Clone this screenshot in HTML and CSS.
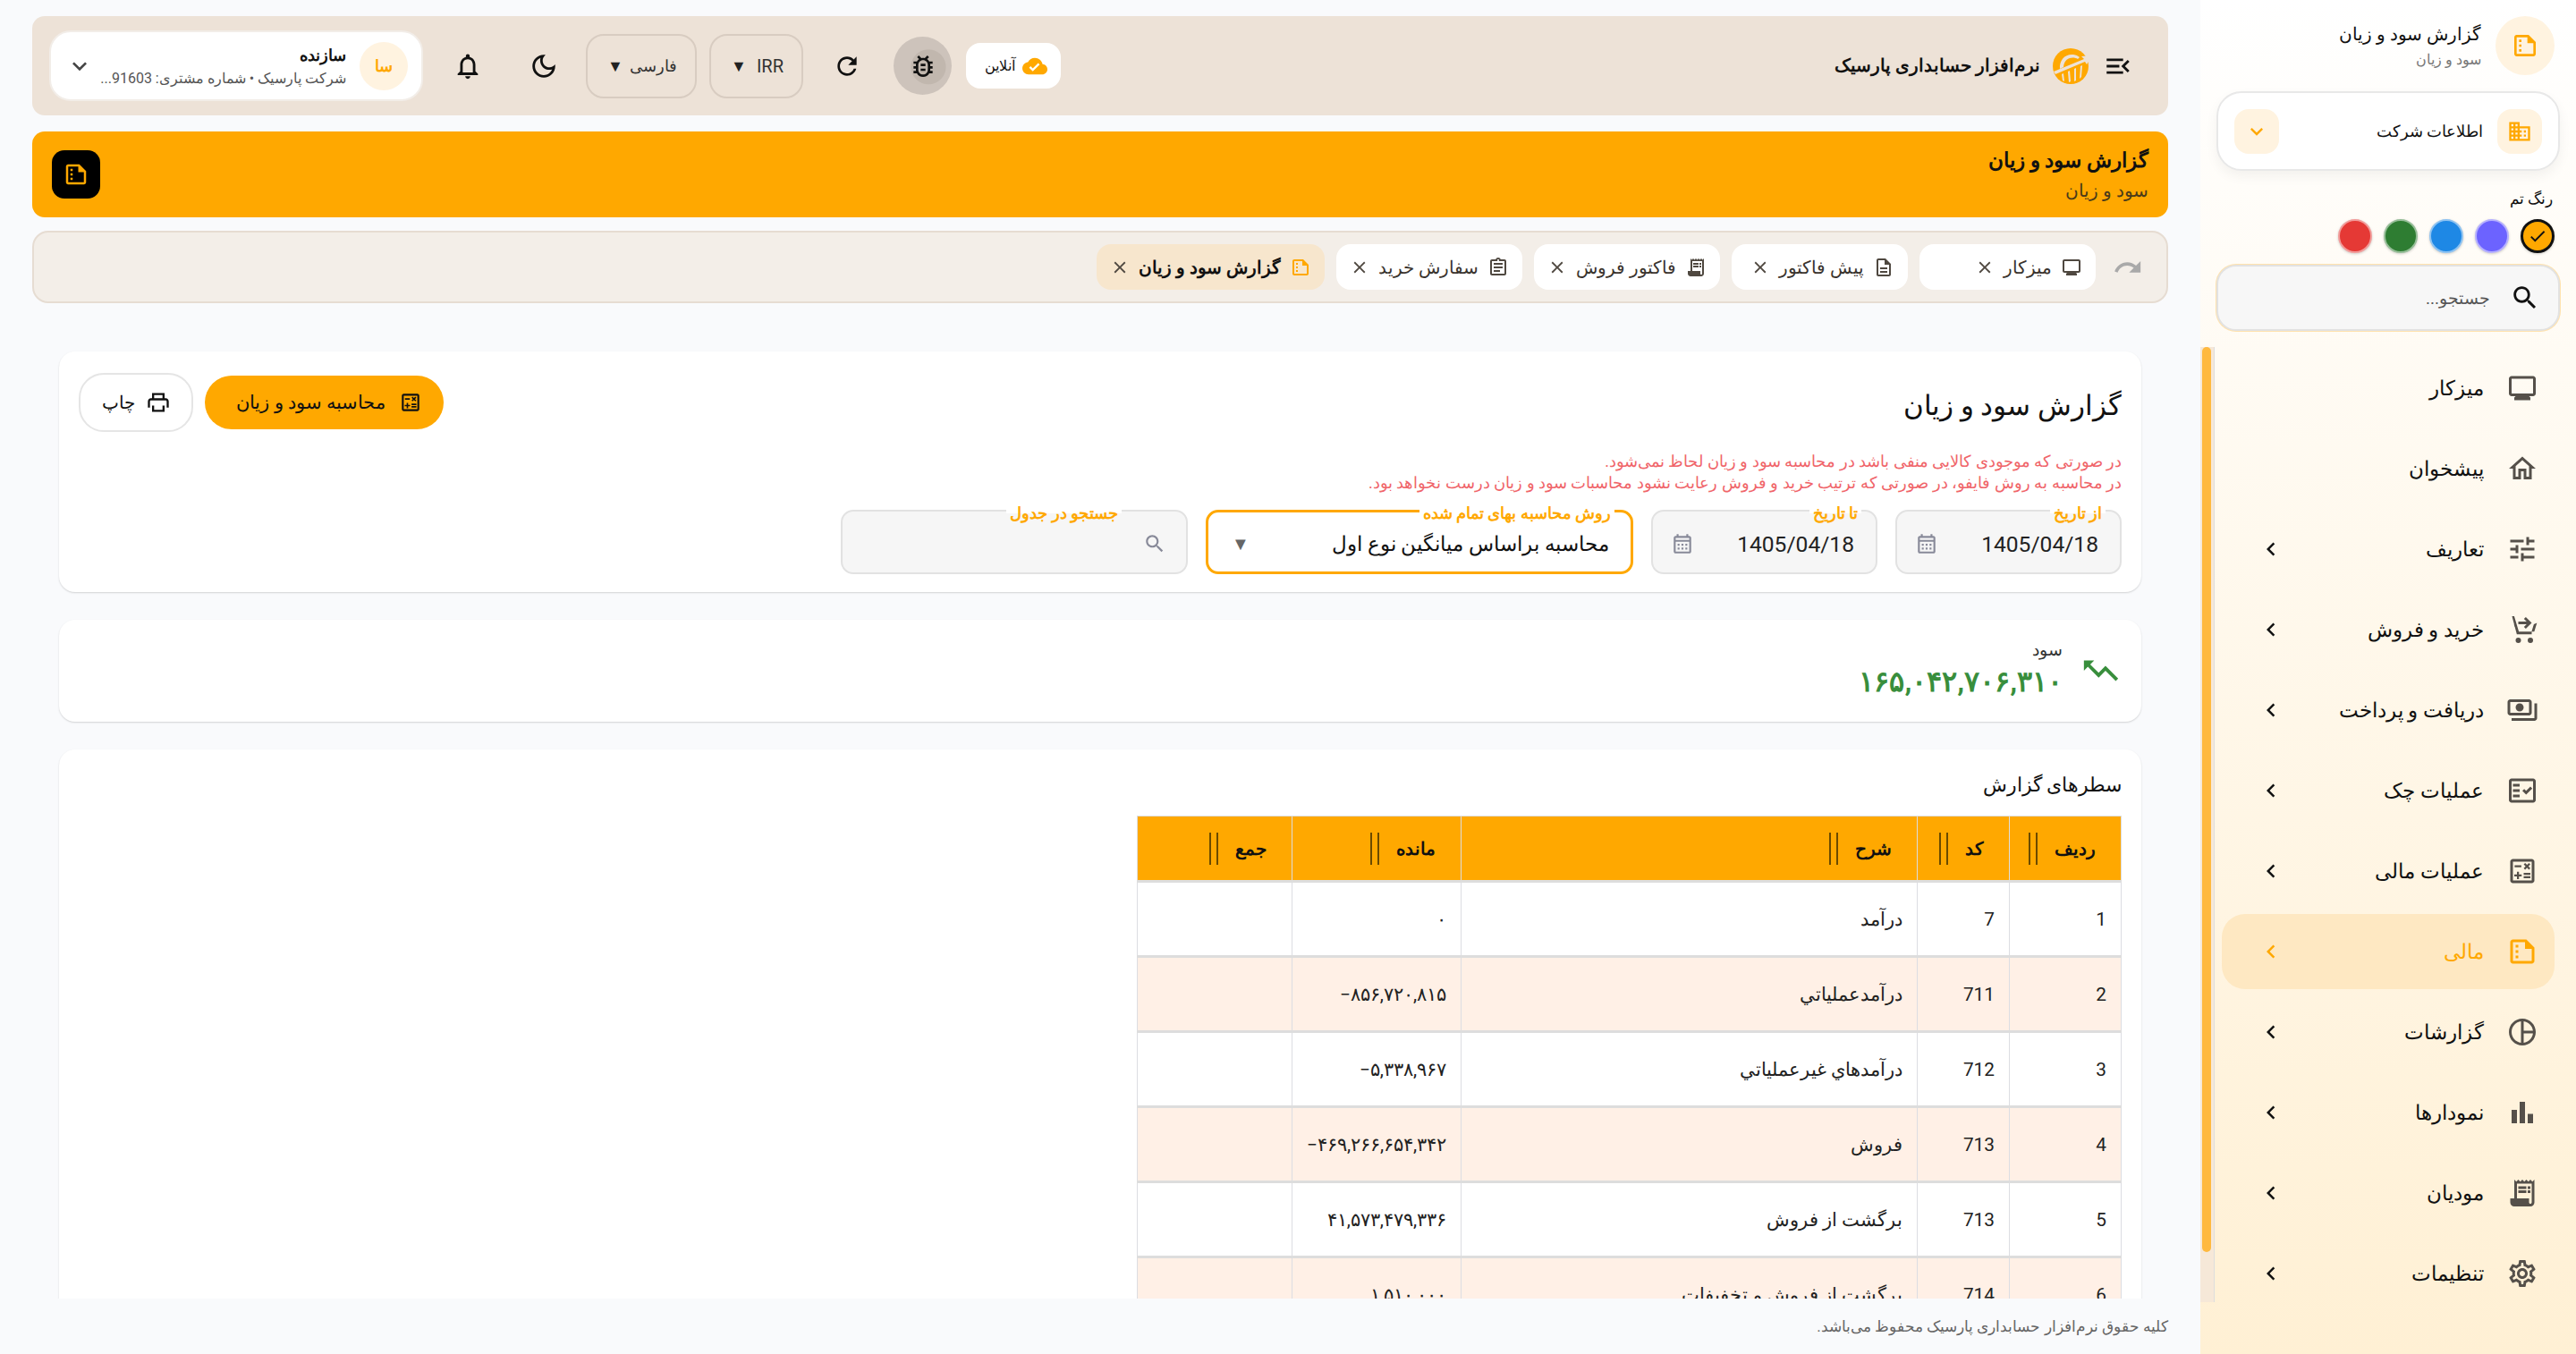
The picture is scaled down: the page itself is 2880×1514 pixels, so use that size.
FILE: index.html
```html
<!DOCTYPE html>
<html lang="fa" dir="rtl">
<head>
  <meta charset="UTF-8">
  <meta name="viewport" content="width=device-width, initial-scale=1.0">
  <title>گزارش سود و زیان</title>
  <link rel="stylesheet" href="styles.css">
</head>
<body>
  <svg class="icon-defs" aria-hidden="true">
    <symbol id="i-desktop" viewBox="0 0 24 24"><path d="M20 3H4c-1.1 0-2 .9-2 2v11c0 1.1.9 2 2 2h3l-1 1v2h12v-2l-1-1h3c1.1 0 2-.9 2-2V5c0-1.1-.9-2-2-2zm0 13H4V5h16v11z"/></symbol>
    <symbol id="i-home" viewBox="0 0 24 24"><path d="M12 5.69l5 4.5V18h-2v-6H9v6H7v-7.81l5-4.5M12 3L2 12h3v8h6v-6h2v6h6v-8h3L12 3z"/></symbol>
    <symbol id="i-tune" viewBox="0 0 24 24"><path d="M3 17v2h6v-2H3zM3 5v2h10V5H3zm10 16v-2h8v-2h-8v-2h-2v6h2zM7 9v2H3v2h4v2h2V9H7zm14 4v-2H11v2h10zm-6-4h2V7h4V5h-4V3h-2v6z"/></symbol>
    <symbol id="i-cart" viewBox="0 0 24 24"><path d="M1 2h3.3l3.6 13.5H19v-2H9.4L6 2.2V2zM7.3 8H5.8l.5 2h.9zM20.6 8l-1.7 5.5h2l2-6.5z"/><path d="M9 6h6.2l-2-2L14.6 2.6 19 7l-4.4 4.4-1.4-1.4 2-2H9z"/><circle cx="9" cy="20" r="2"/><circle cx="18" cy="20" r="2"/></symbol>
    <symbol id="i-payments" viewBox="0 0 24 24"><path d="M19 14V6c0-1.1-.9-2-2-2H3c-1.1 0-2 .9-2 2v8c0 1.1.9 2 2 2h14c1.1 0 2-.9 2-2zm-2 0H3V6h14v8zm-7-7c-1.66 0-3 1.34-3 3s1.34 3 3 3 3-1.34 3-3-1.34-3-3-3zm13 0v11c0 1.1-.9 2-2 2H4v-2h17V7h2z"/></symbol>
    <symbol id="i-check" viewBox="0 0 24 24"><path d="M20 3H4c-1.1 0-2 .9-2 2v14c0 1.1.9 2 2 2h16c1.1 0 2-.9 2-2V5c0-1.1-.9-2-2-2zm0 16H4V5h16v14z"/><path d="M19.41 10.42l-1.42-1.42-3.17 3.17-1.41-1.42L12 12.16 14.82 15zM5 7h5v2H5zM5 11h5v2H5zM5 15h5v2H5z"/></symbol>
    <symbol id="i-calc" viewBox="0 0 24 24"><path d="M19 3H5c-1.1 0-2 .9-2 2v14c0 1.1.9 2 2 2h14c1.1 0 2-.9 2-2V5c0-1.1-.9-2-2-2zm0 16H5V5h14v14z"/><path d="M6.25 7.72h5v1.5h-5zM13 15.75h5v1.5h-5zM13 13.25h5v1.5h-5zM8 18h1.5v-2h2v-1.5h-2v-2H8v2H6V16h2zM14.09 10.95l1.41-1.41 1.41 1.41 1.06-1.06-1.41-1.42 1.41-1.41-1.06-1.06-1.41 1.41-1.41-1.41-1.06 1.06 1.41 1.41-1.41 1.42z"/></symbol>
    <symbol id="i-summary" viewBox="0 0 24 24"><path d="M15 3H5c-1.1 0-1.99.9-1.99 2L3 19c0 1.1.89 2 1.99 2H19c1.1 0 2-.9 2-2V9l-6-6zM5 19V5h9v5h5v9H5z"/><path d="M7 7h2v2H7zM7 11h2v2H7zM7 15h2v2H7z"/></symbol>
    <symbol id="i-pie" viewBox="0 0 24 24"><path d="M12 2C6.48 2 2 6.48 2 12s4.48 10 10 10 10-4.48 10-10S17.52 2 12 2zm-1 17.93C7.05 19.44 4 16.08 4 12s3.05-7.44 7-7.93v15.86zM13 4.07c3.61.45 6.48 3.32 6.93 6.93H13V4.07zM13 19.93V13h6.93c-.45 3.61-3.32 6.48-6.93 6.93z"/></symbol>
    <symbol id="i-bars" viewBox="0 0 24 24"><path d="M4 10h4v10H4zM10 4h4v16h-4zM16 13h4v7h-4z"/></symbol>
    <symbol id="i-receipt" viewBox="0 0 24 24"><path d="M19.5 3.5 18 2l-1.5 1.5L15 2l-1.5 1.5L12 2l-1.5 1.5L9 2 7.5 3.5 6 2v14H3v3c0 1.66 1.34 3 3 3h12c1.66 0 3-1.34 3-3V2l-1.5 1.5zM19 19c0 .55-.45 1-1 1s-1-.45-1-1v-3H8V5h11v14z"/><path d="M9 7h6v2H9zM16 7h2v2h-2zM9 10h6v2H9zM16 10h2v2h-2z"/></symbol>
    <symbol id="i-gear" viewBox="0 0 24 24"><path d="M19.43 12.98c.04-.32.07-.64.07-.98 0-.34-.03-.66-.07-.98l2.11-1.65c.19-.15.24-.42.12-.64l-2-3.46c-.09-.16-.26-.25-.44-.25-.06 0-.12.01-.17.03l-2.49 1c-.52-.4-1.08-.73-1.69-.98l-.38-2.65C14.46 2.18 14.25 2 14 2h-4c-.25 0-.46.18-.49.42l-.38 2.65c-.61.25-1.17.59-1.69.98l-2.49-1c-.06-.02-.12-.03-.18-.03-.17 0-.34.09-.43.25l-2 3.46c-.13.22-.07.49.12.64l2.11 1.65c-.04.32-.07.65-.07.98 0 .33.03.66.07.98l-2.11 1.65c-.19.15-.24.42-.12.64l2 3.46c.09.16.26.25.44.25.06 0 .12-.01.17-.03l2.49-1c.52.4 1.08.73 1.69.98l.38 2.65c.03.24.24.42.49.42h4c.25 0 .46-.18.49-.42l.38-2.65c.61-.25 1.17-.59 1.69-.98l2.49 1c.06.02.12.03.18.03.17 0 .34-.09.43-.25l2-3.46c.12-.22.07-.49-.12-.64l-2.11-1.65zm-1.98-1.71c.04.31.05.52.05.73 0 .21-.02.43-.05.73l-.14 1.13.89.7 1.08.84-.7 1.21-1.27-.51-1.04-.42-.9.68c-.43.32-.84.56-1.25.73l-1.06.43-.16 1.13-.2 1.35h-1.4l-.19-1.35-.16-1.13-1.06-.43c-.43-.18-.83-.41-1.23-.71l-.91-.7-1.06.43-1.27.51-.7-1.21 1.08-.84.89-.7-.14-1.13c-.03-.31-.05-.54-.05-.74s.02-.43.05-.73l.14-1.13-.89-.7-1.08-.84.7-1.21 1.27.51 1.04.42.9-.68c.43-.32.84-.56 1.25-.73l1.06-.43.16-1.13.2-1.35h1.39l.19 1.35.16 1.13 1.06.43c.43.18.83.41 1.23.71l.91.7 1.06-.43 1.27-.51.7 1.21-1.07.85-.89.7.14 1.13zM12 8c-2.21 0-4 1.79-4 4s1.79 4 4 4 4-1.79 4-4-1.79-4-4-4zm0 6c-1.1 0-2-.9-2-2s.9-2 2-2 2 .9 2 2-.9 2-2 2z"/></symbol>
    <symbol id="i-left" viewBox="0 0 24 24"><path d="M15.41 7.41 14 6l-6 6 6 6 1.41-1.41L10.83 12z"/></symbol>
    <symbol id="i-down" viewBox="0 0 24 24"><path d="M16.59 8.59 12 13.17 7.41 8.59 6 10l6 6 6-6z"/></symbol>
    <symbol id="i-search" viewBox="0 0 24 24"><path d="M15.5 14h-.79l-.28-.27C15.41 12.59 16 11.11 16 9.5 16 5.91 13.09 3 9.5 3S3 5.91 3 9.5 5.91 16 9.5 16c1.61 0 3.09-.59 4.23-1.57l.27.28v.79l5 4.99L20.49 19l-4.99-5zm-6 0C7.01 14 5 11.99 5 9.5S7.01 5 9.5 5 14 7.01 14 9.5 11.99 14 9.5 14z"/></symbol>
    <symbol id="i-domain" viewBox="0 0 24 24"><path d="M12 7V3H2v18h20V7H12zM6 19H4v-2h2v2zm0-4H4v-2h2v2zm0-4H4V9h2v2zm0-4H4V5h2v2zm4 12H8v-2h2v2zm0-4H8v-2h2v2zm0-4H8V9h2v2zm0-4H8V5h2v2zm10 12h-8v-2h2v-2h-2v-2h2v-2h-2V9h8v10zm-2-8h-2v2h2v-2zm0 4h-2v2h2v-2z"/></symbol>
    <symbol id="i-bell" viewBox="0 0 24 24"><path d="M12 22c1.1 0 2-.9 2-2h-4c0 1.1.9 2 2 2zm6-6v-5c0-3.07-1.63-5.64-4.5-6.32V4c0-.83-.67-1.5-1.5-1.5s-1.5.67-1.5 1.5v.68C7.64 5.36 6 7.92 6 11v5l-2 2v1h16v-1l-2-2zm-2 1H8v-6c0-2.48 1.51-4.5 4-4.5s4 2.02 4 4.5v6z"/></symbol>
    <symbol id="i-moon" viewBox="0 0 24 24"><path d="M9.37 5.51c-.18.64-.27 1.31-.27 1.99 0 4.08 3.32 7.4 7.4 7.4.68 0 1.35-.09 1.99-.27C17.45 17.19 14.93 19 12 19c-3.86 0-7-3.14-7-7 0-2.93 1.81-5.45 4.37-6.49zM12 3c-4.97 0-9 4.03-9 9s4.03 9 9 9 9-4.03 9-9c0-.46-.04-.92-.1-1.36-.98 1.37-2.58 2.26-4.4 2.26-2.98 0-5.4-2.42-5.4-5.4 0-1.81.89-3.42 2.26-4.4-.44-.06-.9-.1-1.36-.1z"/></symbol>
    <symbol id="i-refresh" viewBox="0 0 24 24"><path d="M17.65 6.35C16.2 4.9 14.21 4 12 4c-4.42 0-7.99 3.58-7.99 8s3.57 8 7.99 8c3.73 0 6.84-2.55 7.73-6h-2.08c-.82 2.33-3.04 4-5.65 4-3.31 0-6-2.69-6-6s2.69-6 6-6c1.66 0 3.14.69 4.22 1.78L13 11h7V4l-2.35 2.35z"/></symbol>
    <symbol id="i-bug" viewBox="0 0 24 24"><path d="M20 8h-2.81c-.45-.78-1.07-1.45-1.82-1.96L17 4.41 15.59 3l-2.17 2.17C12.96 5.06 12.49 5 12 5s-.96.06-1.41.17L8.41 3 7 4.41l1.62 1.63C7.88 6.55 7.26 7.22 6.81 8H4v2h2.09c-.05.33-.09.66-.09 1v1H4v2h2v1c0 .34.04.67.09 1H4v2h2.81c1.04 1.79 2.97 3 5.19 3s4.15-1.21 5.19-3H20v-2h-2.09c.05-.33.09-.66.09-1v-1h2v-2h-2v-1c0-.34-.04-.67-.09-1H20V8zm-4 7c0 2.21-1.79 4-4 4s-4-1.79-4-4v-4c0-2.21 1.79-4 4-4s4 1.79 4 4v4zm-6-1h4v2h-4zm0-4h4v2h-4z"/></symbol>
    <symbol id="i-cloud" viewBox="0 0 24 24"><path d="M19.35 10.04C18.67 6.59 15.64 4 12 4 9.11 4 6.6 5.64 5.35 8.04 2.34 8.36 0 10.91 0 14c0 3.31 2.69 6 6 6h13c2.76 0 5-2.24 5-5 0-2.64-2.05-4.78-4.65-4.96zM10 17l-3.5-3.5 1.41-1.41L10 14.17 15.18 9l1.41 1.41L10 17z"/></symbol>
    <symbol id="i-menu" viewBox="0 0 24 24"><path d="M3 18h13v-2H3v2zm0-5h10v-2H3v2zm0-7v2h13V6H3zm18 9.59L17.42 12 21 8.41 19.59 7l-5 5 5 5L21 15.59z"/></symbol>
    <symbol id="i-redo" viewBox="0 0 24 24"><path d="M18.4 10.6C16.55 8.99 14.15 8 11.5 8c-4.65 0-8.58 3.03-9.96 7.22L3.9 16c1.05-3.19 4.05-5.5 7.6-5.5 1.95 0 3.73.72 5.12 1.88L13 16h9V7l-3.6 3.6z"/></symbol>
    <symbol id="i-doc" viewBox="0 0 24 24"><path d="M8 16h8v2H8zm0-4h8v2H8zm6-10H6c-1.1 0-2 .9-2 2v16c0 1.1.89 2 1.99 2H18c1.1 0 2-.9 2-2V8l-6-6zm4 18H6V4h7v5h5v11z"/></symbol>
    <symbol id="i-clip" viewBox="0 0 24 24"><path d="M19 3h-4.18C14.4 1.84 13.3 1 12 1s-2.4.84-2.82 2H5c-1.1 0-2 .9-2 2v14c0 1.1.9 2 2 2h14c1.1 0 2-.9 2-2V5c0-1.1-.9-2-2-2zm-7 0c.55 0 1 .45 1 1s-.45 1-1 1-1-.45-1-1 .45-1 1-1zm7 16H5V5h14v14z"/><path d="M7 7h10v2H7zM7 11h10v2H7zM7 15h7v2H7z"/></symbol>
    <symbol id="i-close" viewBox="0 0 24 24"><path d="M19 6.41 17.59 5 12 10.59 6.41 5 5 6.41 10.59 12 5 17.59 6.41 19 12 13.41 17.59 19 19 17.59 13.41 12z"/></symbol>
    <symbol id="i-print" viewBox="0 0 24 24"><path d="M19 8h-1V3H6v5H5c-1.66 0-3 1.34-3 3v6h4v4h12v-4h4v-6c0-1.66-1.34-3-3-3zM8 5h8v3H8V5zm8 14H8v-4h8v4zm2-2v-2H6v2H4v-6c0-.55.45-1 1-1h14c.55 0 1 .45 1 1v6h-2z"/></symbol>
    <symbol id="i-date" viewBox="0 0 24 24"><path d="M19 4h-1V2h-2v2H8V2H6v2H5c-1.11 0-1.99.9-1.99 2L3 20c0 1.1.89 2 2 2h14c1.1 0 2-.9 2-2V6c0-1.1-.9-2-2-2zm0 16H5V10h14v10zm0-12H5V6h14v2z"/><path d="M7 12h2v2H7zM11 12h2v2h-2zM15 12h2v2h-2zM7 16h2v2H7zM11 16h2v2h-2zM15 16h2v2h-2z"/></symbol>
    <symbol id="i-trend" viewBox="0 0 24 24"><path d="M8 6l-2.29 2.29 4.88 4.88 4-4L22 16.59 20.59 18l-6-6-4 4-6.3-6.29L2 12V6z"/></symbol>
    <symbol id="i-tick" viewBox="0 0 24 24"><path d="M9 16.17 4.83 12l-1.42 1.41L9 19 21 7l-1.41-1.41z"/></symbol>
  </svg>

  <aside class="sidebar">
    <div class="side-head">
      <span class="side-head-icon"><svg class="ico ico-32"><use href="#i-summary"/></svg></span>
      <div class="side-head-text">
        <div class="side-head-title">گزارش سود و زیان</div>
        <div class="side-head-sub">سود و زیان</div>
      </div>
    </div>

    <div class="company-card">
      <span class="company-icon"><svg class="ico ico-28"><use href="#i-domain"/></svg></span>
      <span class="company-name">اطلاعات شرکت</span>
      <span class="company-icon company-toggle"><svg class="ico ico-28"><use href="#i-down"/></svg></span>
    </div>

    <div class="theme-label">رنگ تم</div>
    <div class="theme-row">
      <span class="swatch swatch-active"><svg class="ico ico-22"><use href="#i-tick"/></svg></span>
      <span class="swatch swatch-violet"></span>
      <span class="swatch swatch-blue"></span>
      <span class="swatch swatch-green"></span>
      <span class="swatch swatch-red"></span>
    </div>

    <div class="side-search">
      <svg class="ico ico-34"><use href="#i-search"/></svg>
      <span class="side-search-text">جستجو...</span>
    </div>

    <div class="side-scroll">
      <nav class="nav-list">
        <a class="nav-item"><svg class="ico nav-ico"><use href="#i-desktop"/></svg><span class="nav-label">میزکار</span></a>
        <a class="nav-item"><svg class="ico nav-ico"><use href="#i-home"/></svg><span class="nav-label">پیشخوان</span></a>
        <a class="nav-item"><svg class="ico nav-ico"><use href="#i-tune"/></svg><span class="nav-label">تعاریف</span><svg class="ico nav-arrow"><use href="#i-left"/></svg></a>
        <a class="nav-item"><svg class="ico nav-ico"><use href="#i-cart"/></svg><span class="nav-label">خرید و فروش</span><svg class="ico nav-arrow"><use href="#i-left"/></svg></a>
        <a class="nav-item"><svg class="ico nav-ico"><use href="#i-payments"/></svg><span class="nav-label">دریافت و پرداخت</span><svg class="ico nav-arrow"><use href="#i-left"/></svg></a>
        <a class="nav-item"><svg class="ico nav-ico"><use href="#i-check"/></svg><span class="nav-label">عملیات چک</span><svg class="ico nav-arrow"><use href="#i-left"/></svg></a>
        <a class="nav-item"><svg class="ico nav-ico"><use href="#i-calc"/></svg><span class="nav-label">عملیات مالی</span><svg class="ico nav-arrow"><use href="#i-left"/></svg></a>
        <a class="nav-item nav-item-active"><svg class="ico nav-ico"><use href="#i-summary"/></svg><span class="nav-label">مالی</span><svg class="ico nav-arrow"><use href="#i-left"/></svg></a>
        <a class="nav-item"><svg class="ico nav-ico"><use href="#i-pie"/></svg><span class="nav-label">گزارشات</span><svg class="ico nav-arrow"><use href="#i-left"/></svg></a>
        <a class="nav-item"><svg class="ico nav-ico"><use href="#i-bars"/></svg><span class="nav-label">نمودارها</span><svg class="ico nav-arrow"><use href="#i-left"/></svg></a>
        <a class="nav-item"><svg class="ico nav-ico"><use href="#i-receipt"/></svg><span class="nav-label">مودیان</span><svg class="ico nav-arrow"><use href="#i-left"/></svg></a>
        <a class="nav-item"><svg class="ico nav-ico"><use href="#i-gear"/></svg><span class="nav-label">تنظیمات</span><svg class="ico nav-arrow"><use href="#i-left"/></svg></a>
      </nav>
      <div class="side-scrollbar"><div class="side-thumb"></div></div>
    </div>
  </aside>

  <div class="main">
    <header class="topbar">
      <div class="brand">
        <svg class="ico ico-34 brand-menu"><use href="#i-menu"/></svg>
        <svg class="brand-logo" viewBox="0 0 44 44">
          <circle cx="21" cy="22" r="20" fill="#ffa800"/>
          <path d="M9 25C8 15 15 8 24 9c3 .4 5 1.4 7 3l-2 2c-5-3-15-2-16 9z" fill="#ede2d7"/>
          <path d="M2 28 36 14l-3-3 12-1-6 10-2-3L4 31z" fill="#ede2d7"/>
          <path d="M11 31l2-1 1 9-2-1zM18 28l2-1 1 12-2 1zM25 25l2-1 0 14-2 1zM32 22l2-1-1 13-2 2z" fill="#ede2d7"/>
        </svg>
        <span class="brand-name">نرم‌افزار حسابداری پارسیک</span>
      </div>

      <div class="tools">
        <span class="online-pill"><svg class="ico ico-28 orange"><use href="#i-cloud"/></svg><span>آنلاین</span></span>
        <span class="tool-btn tool-btn-bug"><svg class="ico ico-32"><use href="#i-bug"/></svg></span>
        <span class="tool-btn"><svg class="ico ico-32"><use href="#i-refresh"/></svg></span>
        <span class="select-pill select-currency"><span class="select-text-latin">IRR</span><span class="caret">▼</span></span>
        <span class="select-pill select-lang"><span>فارسی</span><span class="caret">▼</span></span>
        <span class="tool-btn tool-btn-moon"><svg class="ico ico-34"><use href="#i-moon"/></svg></span>
        <span class="tool-btn tool-btn-bell"><svg class="ico ico-34"><use href="#i-bell"/></svg></span>
        <div class="user-pill">
          <span class="user-avatar">سا</span>
          <div class="user-text">
            <div class="user-name">سازنده</div>
            <div class="user-sub">شرکت پارسیک • شماره مشتری: 91603...</div>
          </div>
          <svg class="ico ico-32 user-chevron"><use href="#i-down"/></svg>
        </div>
      </div>
    </header>

    <section class="banner">
      <div>
        <div class="banner-title">گزارش سود و زیان</div>
        <div class="banner-sub">سود و زیان</div>
      </div>
      <span class="banner-icon"><svg class="ico ico-30"><use href="#i-summary"/></svg></span>
    </section>

    <section class="tabs">
      <svg class="ico ico-34 tabs-redo"><use href="#i-redo"/></svg>
      <span class="tab"><svg class="ico ico-24"><use href="#i-desktop"/></svg><span class="tab-label">میزکار</span><svg class="ico ico-22 tab-x"><use href="#i-close"/></svg></span>
      <span class="tab"><svg class="ico ico-24"><use href="#i-doc"/></svg><span class="tab-label">پیش فاکتور</span><svg class="ico ico-22 tab-x"><use href="#i-close"/></svg></span>
      <span class="tab"><svg class="ico ico-24"><use href="#i-receipt"/></svg><span class="tab-label">فاکتور فروش</span><svg class="ico ico-22 tab-x"><use href="#i-close"/></svg></span>
      <span class="tab"><svg class="ico ico-24"><use href="#i-clip"/></svg><span class="tab-label">سفارش خرید</span><svg class="ico ico-22 tab-x"><use href="#i-close"/></svg></span>
      <span class="tab tab-active"><svg class="ico ico-24 orange"><use href="#i-summary"/></svg><span class="tab-label">گزارش سود و زیان</span><svg class="ico ico-22 tab-x"><use href="#i-close"/></svg></span>
    </section>

    <main class="content">
      <section class="card filter-card">
        <div class="filter-top">
          <h1 class="page-title">گزارش سود و زیان</h1>
          <div class="actions">
            <button class="btn-primary"><svg class="ico ico-26"><use href="#i-calc"/></svg>محاسبه سود و زیان</button>
            <button class="btn-outline"><svg class="ico ico-28"><use href="#i-print"/></svg>چاپ</button>
          </div>
        </div>
        <div class="notes">
          <div>در صورتی که موجودی کالایی منفی باشد در محاسبه سود و زیان لحاظ نمی‌شود.</div>
          <div>در محاسبه به روش فایفو، در صورتی که ترتیب خرید و فروش رعایت نشود محاسبات سود و زیان درست نخواهد بود.</div>
        </div>
        <div class="fields">
          <div class="field field-date">
            <span class="field-label">از تاریخ</span>
            <span class="field-value">1405/04/18</span>
            <svg class="ico ico-26 field-ico"><use href="#i-date"/></svg>
          </div>
          <div class="field field-date">
            <span class="field-label">تا تاریخ</span>
            <span class="field-value">1405/04/18</span>
            <svg class="ico ico-26 field-ico"><use href="#i-date"/></svg>
          </div>
          <div class="field field-select">
            <span class="field-label">روش محاسبه بهای تمام شده</span>
            <span class="field-value">محاسبه براساس میانگین نوع اول</span>
            <span class="caret caret-grey">▼</span>
          </div>
          <div class="field field-search">
            <span class="field-label">جستجو در جدول</span>
            <svg class="ico ico-26 field-ico"><use href="#i-search"/></svg>
          </div>
        </div>
      </section>

      <section class="card profit-card">
        <svg class="ico profit-ico"><use href="#i-trend"/></svg>
        <div>
          <div class="profit-label">سود</div>
          <div class="profit-value">۱۶۵,۰۴۲,۷۰۶,۳۱۰</div>
        </div>
      </section>

      <section class="card table-card">
        <h2 class="table-title">سطرهای گزارش</h2>
        <table class="report">
          <colgroup>
            <col class="col-row"><col class="col-code"><col class="col-desc"><col class="col-rest"><col class="col-sum">
          </colgroup>
          <thead>
            <tr>
              <th><div class="th-inner"><span>ردیف</span><i class="col-grip"></i></div></th>
              <th><div class="th-inner"><span>کد</span><i class="col-grip"></i></div></th>
              <th><div class="th-inner"><span>شرح</span><i class="col-grip"></i></div></th>
              <th><div class="th-inner"><span>مانده</span><i class="col-grip"></i></div></th>
              <th><div class="th-inner"><span>جمع</span><i class="col-grip"></i></div></th>
            </tr>
          </thead>
          <tbody>
            <tr><td>1</td><td>7</td><td>درآمد</td><td class="num">۰</td><td></td></tr>
            <tr><td>2</td><td>711</td><td>درآمدعملیاتي</td><td class="num">−۸۵۶,۷۲۰,۸۱۵</td><td></td></tr>
            <tr><td>3</td><td>712</td><td>درآمدهاي غيرعملياتي</td><td class="num">−۵,۳۳۸,۹۶۷</td><td></td></tr>
            <tr><td>4</td><td>713</td><td>فروش</td><td class="num">−۴۶۹,۲۶۶,۶۵۴,۳۴۲</td><td></td></tr>
            <tr><td>5</td><td>713</td><td>برگشت از فروش</td><td class="num">۴۱,۵۷۳,۴۷۹,۳۳۶</td><td></td></tr>
            <tr><td>6</td><td>714</td><td>برگشت از فروش و تخفیفات</td><td class="num">۱,۵۱۰,۰۰۰</td><td></td></tr>
          </tbody>
        </table>
      </section>
    </main>

    <footer class="footer">کلیه حقوق نرم‌افزار حسابداری پارسیک محفوظ می‌باشد.</footer>
  </div>
</body>
</html>
```

FILE: styles.css
```css
* {
  box-sizing: border-box;
}
html, body {
  height: 100%;
  margin: 0;
}
body {
  font-family: Roboto, sans-serif;
  background-color: #f9fafc;
  color: #111;
  display: flex;
  height: 100vh;
  overflow: hidden;
}
.icon-defs {
  display: none;
}
.ico {
  display: block;
  flex: none;
  fill: currentColor;
}
.ico-22 { width: 22px; height: 22px; }
.ico-24 { width: 24px; height: 24px; }
.ico-26 { width: 26px; height: 26px; }
.ico-28 { width: 28px; height: 28px; }
.ico-30 { width: 30px; height: 30px; }
.ico-32 { width: 32px; height: 32px; }
.ico-34 { width: 34px; height: 34px; }
.orange { color: #ffa800; }

/* sidebar */
.sidebar {
  width: 420px;
  flex: none;
  display: flex;
  flex-direction: column;
  background: linear-gradient(180deg, #ffffff 0%, #fff0d4 100%);
}
.side-head {
  display: flex;
  align-items: center;
  gap: 16px;
  padding: 18px 24px 0;
}
.side-head-icon {
  width: 66px;
  height: 66px;
  border-radius: 50%;
  background-color: #fff3e0;
  color: #ffa800;
  display: flex;
  align-items: center;
  justify-content: center;
}
.side-head-title {
  font-size: 20px;
  font-weight: 500;
  line-height: 32px;
}
.side-head-sub {
  font-size: 16px;
  color: #777;
  line-height: 26px;
}
.company-card {
  margin: 18px 18px 0;
  height: 89px;
  padding: 0 18px;
  display: flex;
  align-items: center;
  gap: 16px;
  background-color: #fff;
  border: 2px solid #e8e8e8;
  border-radius: 28px;
  box-shadow: 0 6px 14px rgba(0, 0, 0, 0.05);
}
.company-icon {
  width: 50px;
  height: 50px;
  border-radius: 16px;
  background-color: #fff3e0;
  color: #ffa800;
  display: flex;
  align-items: center;
  justify-content: center;
}
.company-name {
  font-size: 18px;
  font-weight: 500;
  flex: 1;
}
.theme-label {
  font-size: 17px;
  margin: 18px 26px 0;
  line-height: 26px;
}
.theme-row {
  display: flex;
  gap: 13px;
  padding: 10px 24px 0;
}
.swatch {
  width: 38px;
  height: 38px;
  border-radius: 50%;
  border: 2px solid;
  box-shadow: 0 1px 3px rgba(0, 0, 0, 0.2);
  display: flex;
  align-items: center;
  justify-content: center;
}
.swatch-active { background-color: #ffa800; border: 3px solid #111; }
.swatch-violet { background-color: #6c63ff; border-color: #b6b1ff; }
.swatch-blue { background-color: #1e88e5; border-color: #8ec3f2; }
.swatch-green { background-color: #2e7d32; border-color: #96be98; }
.swatch-red { background-color: #e53935; border-color: #f29c9a; }
.side-search {
  margin: 13px 18px 0;
  height: 74px;
  padding: 0 20px 0;
  display: flex;
  align-items: center;
  gap: 22px;
  background-color: #f7f7f7;
  border: 2px solid #e2e2e2;
  border-radius: 22px;
  box-shadow: 0 0 0 1px #ffe2ae;
}
.side-search-text {
  font-size: 19px;
  color: #555;
}
.side-scroll {
  margin-top: 18px;
  flex: 1;
  min-height: 0;
  display: flex;
  margin-bottom: 58px;
}
.nav-list {
  flex: 1;
  padding: 4px 24px 0 8px;
  display: flex;
  flex-direction: column;
  gap: 6px;
}
.nav-item {
  height: 84px;
  flex: none;
  padding: 0 18px 0 12px;
  display: flex;
  align-items: center;
  border-radius: 26px;
}
.nav-ico {
  width: 36px;
  height: 36px;
  color: #55504a;
}
.nav-label {
  font-size: 23px;
  margin-right: 25px;
  flex: 1;
}
.nav-arrow {
  width: 30px;
  height: 30px;
  margin-left: 28px;
}
.nav-item-active {
  background-color: #fee8c2;
  color: #ffa800;
}
.nav-item-active .nav-ico {
  color: #ffa800;
}
.side-scrollbar {
  width: 16px;
  flex: none;
  padding: 0 3px;
  background-color: #f6e8d8;
  border-right: 1px solid #ddd;
}
.side-thumb {
  width: 10px;
  height: 1012px;
  border-radius: 6px;
  background-color: #ffb93f;
}

/* main column */
.main {
  flex: 1;
  min-width: 0;
  display: flex;
  flex-direction: column;
  padding: 18px 36px 0;
}
.topbar {
  height: 111px;
  flex: none;
  padding: 0 39px 0 19px;
  display: flex;
  align-items: center;
  justify-content: space-between;
  background-color: #ede2d7;
  border-radius: 14px;
}
.brand {
  display: flex;
  align-items: center;
  gap: 13px;
}
.brand-logo {
  width: 44px;
  height: 44px;
  flex: none;
}
.brand-name {
  font-size: 19.6px;
  font-weight: 700;
}
.tools {
  display: flex;
  align-items: center;
}
.online-pill {
  width: 106px;
  height: 51px;
  padding: 0 15px;
  display: flex;
  align-items: center;
  gap: 8px;
  background-color: #fff;
  border-radius: 16px;
  font-size: 16px;
  margin-left: 16px;
}
.tool-btn {
  width: 65px;
  height: 65px;
  border-radius: 50%;
  display: flex;
  align-items: center;
  justify-content: center;
  margin-left: 16px;
}
.tool-btn-bug {
  background: radial-gradient(circle at 60% 52%, #c1b7ae 0, #c1b7ae 19px, #cdc3bb 20px);
  margin-left: 20px;
}
.tool-btn-moon {
  margin-left: 20px;
}
.tool-btn-bell {
  margin-left: 17px;
}
.select-pill {
  height: 72px;
  padding: 0 20px 0 22px;
  margin-left: 14px;
  display: flex;
  align-items: center;
  justify-content: space-between;
  font-size: 18px;
  color: #333;
  border: 2px solid #d8ccc1;
  border-radius: 20px;
}
.select-currency { width: 105px; }
.select-lang { width: 124px; margin-left: 15px; }
.select-text-latin { font-size: 20px; }
.caret {
  font-size: 18px;
  color: #222;
}
.caret-grey {
  font-size: 20px;
  color: #666;
}
.user-pill {
  width: 418px;
  height: 79px;
  padding: 0 15px 0 16px;
  display: flex;
  align-items: center;
  gap: 15px;
  background-color: #fff;
  border: 2px solid #f2ede8;
  border-radius: 24px;
}
.user-avatar {
  width: 54px;
  height: 54px;
  flex: none;
  border-radius: 50%;
  background-color: #fff3e0;
  color: #ffa800;
  font-size: 18px;
  font-weight: 700;
  display: flex;
  align-items: center;
  justify-content: center;
}
.user-text {
  flex: 1;
  min-width: 0;
}
.user-name {
  font-size: 18px;
  font-weight: 700;
  line-height: 28px;
}
.user-sub {
  font-size: 16px;
  color: #555;
  line-height: 24px;
  white-space: nowrap;
}
.user-chevron {
  color: #444;
}
.banner {
  height: 96px;
  flex: none;
  margin-top: 18px;
  padding: 0 22px;
  display: flex;
  align-items: center;
  justify-content: space-between;
  background-color: #ffa800;
  border-radius: 14px;
}
.banner-title {
  font-size: 23px;
  font-weight: 700;
  line-height: 36px;
}
.banner-sub {
  font-size: 20px;
  color: #4a3b1a;
  line-height: 30px;
}
.banner-icon {
  width: 54px;
  height: 54px;
  border-radius: 14px;
  background-color: #000;
  color: #ffa800;
  display: flex;
  align-items: center;
  justify-content: center;
}
.tabs {
  height: 81px;
  flex: none;
  margin-top: 15px;
  padding: 0 26px 0 0;
  display: flex;
  align-items: center;
  gap: 13px;
  background-color: #f3eee8;
  border: 2px solid #e6dcd2;
  border-radius: 18px;
}
.tabs-redo {
  color: #a9a9a9;
  margin-left: 6px;
}
.tab {
  min-width: 197px;
  height: 51px;
  padding: 0 15px;
  display: flex;
  align-items: center;
  gap: 10px;
  background-color: #fff;
  border-radius: 16px;
  color: #4f4840;
}
.tab-label {
  font-size: 20px;
  color: #3a342e;
}
.tab-x {
  color: #4f4840;
}
.tab-active {
  background-color: #f7e6cd;
}
.tab-active .tab-label {
  color: #111;
  font-weight: 700;
}

/* page content */
.content {
  flex: 1;
  min-height: 0;
  overflow: hidden;
  padding: 54px 30px 0;
  display: flex;
  flex-direction: column;
  gap: 31px;
}
.card {
  flex: none;
  background-color: #fff;
  border-radius: 18px;
  box-shadow: 0 1px 2px rgba(0, 0, 0, 0.16);
}
.filter-card {
  height: 269px;
  padding: 24px 22px 0;
}
.filter-top {
  height: 66px;
  display: flex;
  align-items: center;
  justify-content: space-between;
}
.page-title {
  margin: 6px 0 0;
  font-size: 31px;
  font-weight: 400;
}
.actions {
  display: flex;
  align-items: center;
  gap: 13px;
}
.btn-primary {
  height: 60px;
  width: 267px;
  padding: 0 24px 0 0;
  display: flex;
  align-items: center;
  gap: 15px;
  font-family: inherit;
  font-size: 21px;
  font-weight: 500;
  color: #111;
  background-color: #ffa800;
  border: none;
  border-radius: 30px;
}
.btn-outline {
  height: 66px;
  width: 128px;
  padding: 0;
  display: flex;
  align-items: center;
  justify-content: center;
  gap: 12px;
  font-family: inherit;
  font-size: 20px;
  font-weight: 500;
  color: #111;
  background-color: #fff;
  border: 2px solid #e5e5e5;
  border-radius: 28px;
}
.notes {
  margin-top: 21px;
  font-size: 18px;
  line-height: 24px;
  color: #f0656a;
}
.fields {
  margin-top: 18px;
  display: flex;
  gap: 20px;
}
.field {
  position: relative;
  height: 72px;
  padding: 4px 24px 0 20px;
  display: flex;
  align-items: center;
  justify-content: space-between;
  background-color: #f6f6f6;
  border: 2px solid #e2e2e2;
  border-radius: 14px;
}
.field-date { width: 253px; }
.field-select {
  width: 478px;
  padding-left: 26px;
  background-color: #fff;
  border: 3px solid #ffa800;
}
.field-search {
  width: 388px;
  justify-content: flex-start;
  padding-right: 22px;
}
.field-label {
  position: absolute;
  top: -7px;
  right: 16px;
  padding: 0 4px;
  background: linear-gradient(#fff 50%, #f6f6f6 50%);
  color: #ffa800;
  font-size: 17.5px;
  font-weight: 700;
  line-height: 18px;
}
.field-select .field-label {
  right: 18px;
  background: #fff;
  top: -8px;
}
.field-search .field-label {
  right: 72px;
}
.field-value {
  font-size: 24.6px;
  color: #222;
}
.field-select .field-value {
  font-size: 23.4px;
  color: #111;
}
.field-ico {
  color: #888a99;
}
.profit-card {
  height: 114px;
  padding: 0 22px;
  display: flex;
  align-items: center;
  gap: 20px;
}
.profit-ico {
  width: 46px;
  height: 46px;
  color: #388e3c;
}
.profit-label {
  font-size: 19px;
  color: #333;
  line-height: 24px;
}
.profit-value {
  direction: ltr;
  font-size: 32px;
  font-weight: 700;
  color: #388e3c;
  line-height: 46px;
}
.table-card {
  padding: 22px 22px 0;
}
.table-title {
  margin: 0 0 16px;
  font-size: 22px;
  font-weight: 500;
  line-height: 36px;
  text-align: right;
}
.report {
  width: 1100px;
  table-layout: fixed;
  border-collapse: collapse;
}
.col-row { width: 125px; }
.col-code { width: 103px; }
.col-desc { width: 510px; }
.col-rest { width: 189px; }
.col-sum { width: 173px; }
.report th {
  height: 73px;
  padding: 0 28px 0 0;
  background-color: #ffa800;
  border: 1px solid #ddd;
  border-bottom: 3px solid #ddd;
  font-size: 20px;
  font-weight: 700;
}
.th-inner {
  display: flex;
  align-items: center;
  gap: 19px;
}
.col-grip {
  width: 10px;
  height: 36px;
  flex: none;
  border-left: 2px solid #6b4a00;
  border-right: 2px solid #6b4a00;
}
.report td {
  height: 84px;
  padding: 0 16px;
  border: 1px solid #dcdde2;
  border-bottom: 3px solid #dddddd;
  font-size: 20.8px;
  color: #222;
}
.report tbody tr:nth-child(even) td {
  background-color: #fff0e6;
}
.report td.num {
  direction: ltr;
  text-align: right;
}
.footer {
  height: 62px;
  flex: none;
  display: flex;
  align-items: center;
  font-size: 17px;
  color: #666;
}
```
